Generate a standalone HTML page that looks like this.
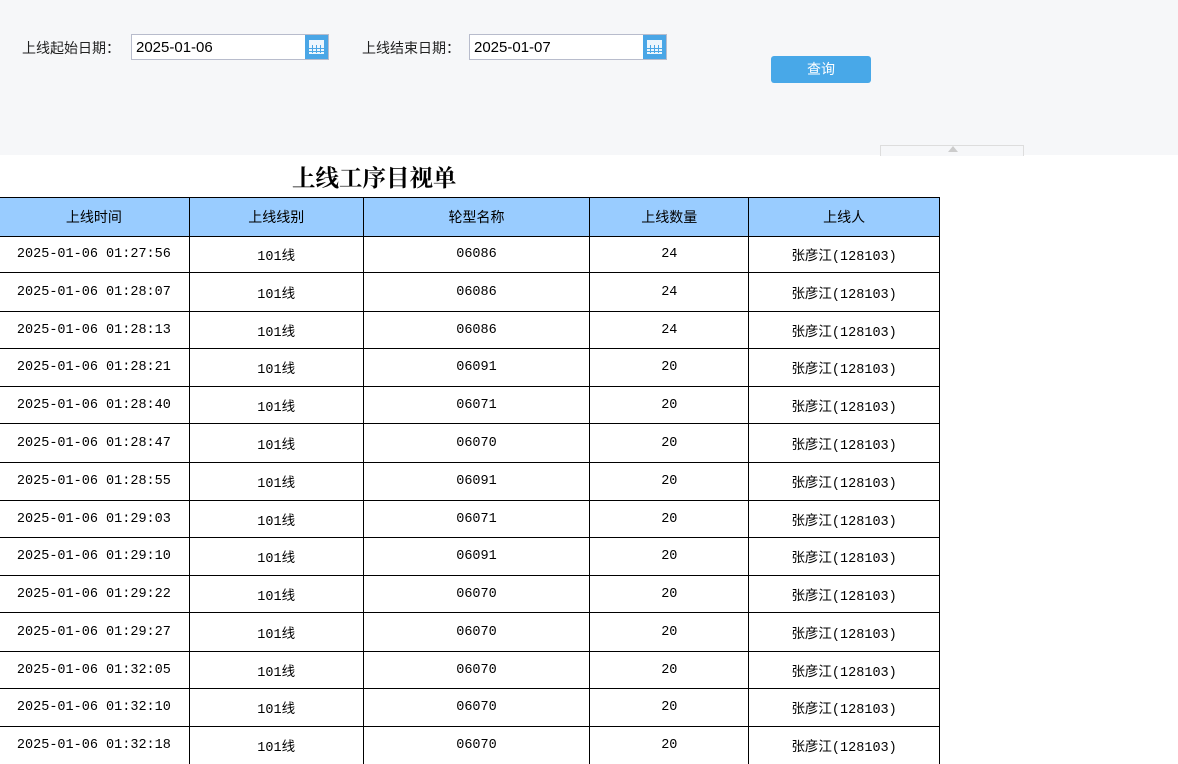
<!DOCTYPE html>
<html><head><meta charset="utf-8"><style>
body{margin:0;width:1178px;height:741px;overflow:hidden;background:#fff;font-family:"Liberation Sans","Noto Sans CJK SC",sans-serif;position:relative}
.top{position:absolute;left:0;top:0;width:1178px;height:155px;background:#f6f7f9}
.lbl{position:absolute;top:38px;font-size:14px;color:#222}
.inp{position:absolute;top:34px;height:24px;border:1px solid #b8bccc;background:#fff;font-size:15px;line-height:26px;padding-left:4px;box-sizing:content-box;color:#000}
.cal{position:absolute;right:0;top:0;width:23px;height:24px;background:#4aa6e6}
.btn{position:absolute;left:771px;top:56px;width:100px;height:27px;background:#48a8e8;border-radius:3px;color:#fff;font-size:14px;text-align:center;line-height:27px}
.tab{position:absolute;left:880px;top:145px;width:142px;height:10px;border:1px solid #ddd;border-bottom:none;background:#f6f7f9}
.title{position:absolute;left:292px;top:159px;font-size:23.5px;font-weight:bold;font-family:"Liberation Serif","Noto Serif CJK SC",serif;color:#000}
.row{position:absolute;left:-1px;width:941px;border-bottom:1px solid #000;display:flex}
.row div{border-right:1px solid #000;text-align:center;box-sizing:border-box;font-family:"Liberation Mono","Noto Sans CJK SC",monospace;font-size:13.5px;display:flex;align-items:center;justify-content:center}
.c1{width:191px}.c2{width:174px}.c3{width:227px}.c4{width:159px}.c5{width:191px}
.hd{background:#99ccff;border-top:1px solid #000}
.hd div{font-family:"Liberation Sans","Noto Sans CJK SC",sans-serif;font-size:14px}
</style></head><body>
<div class="top"></div>
<div class="lbl" style="left:22px">上线起始日期：</div>
<div class="inp" style="left:131px;width:192px">2025-01-06<div class="cal"><svg width="23" height="24" viewBox="0 0 23 24"><rect x="4" y="5" width="15" height="14" fill="#fff" opacity=".9"/><g fill="#4aa6e6"><rect x="7" y="10" width="1" height="8"/><rect x="11" y="10" width="1" height="8"/><rect x="15" y="10" width="1" height="8"/><rect x="4" y="13" width="15" height="1"/><rect x="4" y="16" width="15" height="1"/></g></svg></div></div>
<div class="lbl" style="left:362px">上线结束日期：</div>
<div class="inp" style="left:469px;width:192px">2025-01-07<div class="cal"><svg width="23" height="24" viewBox="0 0 23 24"><rect x="4" y="5" width="15" height="14" fill="#fff" opacity=".9"/><g fill="#4aa6e6"><rect x="7" y="10" width="1" height="8"/><rect x="11" y="10" width="1" height="8"/><rect x="15" y="10" width="1" height="8"/><rect x="4" y="13" width="15" height="1"/><rect x="4" y="16" width="15" height="1"/></g></svg></div></div>
<div class="btn">查询</div>
<div class="tab"><div style="position:absolute;left:67px;top:0;width:0;height:0;border-left:5px solid transparent;border-right:5px solid transparent;border-bottom:6px solid #ccc"></div></div>
<div class="title">上线工序目视单</div>
<div class="row hd" style="top:197px;height:38px"><div class="c1">上线时间</div><div class="c2">上线线别</div><div class="c3">轮型名称</div><div class="c4">上线数量</div><div class="c5">上线人</div></div>
<div class="row" style="top:236px;height:36px"><div class="c1">2025-01-06 01:27:56</div><div class="c2">101线</div><div class="c3">06086</div><div class="c4">24</div><div class="c5">张彦江(128103)</div></div>
<div class="row" style="top:273px;height:38px"><div class="c1">2025-01-06 01:28:07</div><div class="c2">101线</div><div class="c3">06086</div><div class="c4">24</div><div class="c5">张彦江(128103)</div></div>
<div class="row" style="top:312px;height:36px"><div class="c1">2025-01-06 01:28:13</div><div class="c2">101线</div><div class="c3">06086</div><div class="c4">24</div><div class="c5">张彦江(128103)</div></div>
<div class="row" style="top:349px;height:37px"><div class="c1">2025-01-06 01:28:21</div><div class="c2">101线</div><div class="c3">06091</div><div class="c4">20</div><div class="c5">张彦江(128103)</div></div>
<div class="row" style="top:387px;height:36px"><div class="c1">2025-01-06 01:28:40</div><div class="c2">101线</div><div class="c3">06071</div><div class="c4">20</div><div class="c5">张彦江(128103)</div></div>
<div class="row" style="top:424px;height:38px"><div class="c1">2025-01-06 01:28:47</div><div class="c2">101线</div><div class="c3">06070</div><div class="c4">20</div><div class="c5">张彦江(128103)</div></div>
<div class="row" style="top:463px;height:37px"><div class="c1">2025-01-06 01:28:55</div><div class="c2">101线</div><div class="c3">06091</div><div class="c4">20</div><div class="c5">张彦江(128103)</div></div>
<div class="row" style="top:501px;height:36px"><div class="c1">2025-01-06 01:29:03</div><div class="c2">101线</div><div class="c3">06071</div><div class="c4">20</div><div class="c5">张彦江(128103)</div></div>
<div class="row" style="top:538px;height:37px"><div class="c1">2025-01-06 01:29:10</div><div class="c2">101线</div><div class="c3">06091</div><div class="c4">20</div><div class="c5">张彦江(128103)</div></div>
<div class="row" style="top:576px;height:36px"><div class="c1">2025-01-06 01:29:22</div><div class="c2">101线</div><div class="c3">06070</div><div class="c4">20</div><div class="c5">张彦江(128103)</div></div>
<div class="row" style="top:613px;height:38px"><div class="c1">2025-01-06 01:29:27</div><div class="c2">101线</div><div class="c3">06070</div><div class="c4">20</div><div class="c5">张彦江(128103)</div></div>
<div class="row" style="top:652px;height:36px"><div class="c1">2025-01-06 01:32:05</div><div class="c2">101线</div><div class="c3">06070</div><div class="c4">20</div><div class="c5">张彦江(128103)</div></div>
<div class="row" style="top:689px;height:37px"><div class="c1">2025-01-06 01:32:10</div><div class="c2">101线</div><div class="c3">06070</div><div class="c4">20</div><div class="c5">张彦江(128103)</div></div>
<div class="row" style="top:727px;height:37px;border-bottom:none"><div class="c1">2025-01-06 01:32:18</div><div class="c2">101线</div><div class="c3">06070</div><div class="c4">20</div><div class="c5">张彦江(128103)</div></div>
</body></html>
